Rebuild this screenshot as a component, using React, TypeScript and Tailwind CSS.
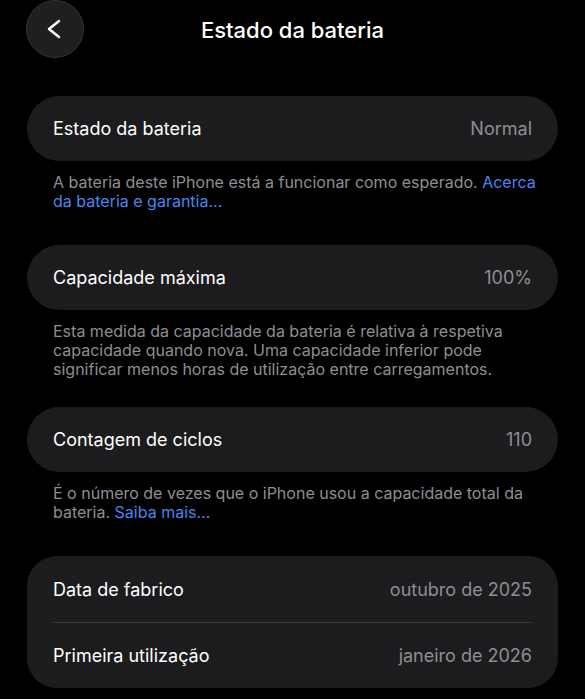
import React from "react";

const font = { fontFamily: "Inter, 'Noto Sans', sans-serif" };

function Row({ label, value, h = "h-[65px]" }: { label: string; value: string; h?: string }) {
  return (
    <div className={`flex ${h} items-center justify-between px-[26px]`}>
      <span className="text-[18px] text-white">{label}</span>
      <span className="text-[18px] text-[#8e8e93]">{value}</span>
    </div>
  );
}

function Note({ children }: { children: React.ReactNode }) {
  return (
    <p className="pl-[53px] pr-[48px] pt-[12px] text-[16px] leading-[19px] text-[#8e8e93]">
      {children}
    </p>
  );
}

export default function App() {
  return (
    <main
      className="min-h-screen w-[585px] h-[699px] overflow-hidden bg-black"
      style={font}
    >
      <header className="relative flex h-[60px] items-center justify-center">
        <button className="absolute left-[26px] top-0 flex h-[58px] w-[58px] items-center justify-center rounded-full border border-[#333335] bg-[#1f1f21]">
          <svg width="16" height="20" viewBox="0 0 16 20" fill="none" className="-ml-[2px]">
            <path
              d="M13 2L3 10l10 8"
              stroke="white"
              strokeWidth="2.5"
              strokeLinecap="round"
              strokeLinejoin="round"
            />
          </svg>
        </button>
        <h1 className="text-[22px] font-medium text-white">Estado da bateria</h1>
      </header>

      <div className="mt-[36px] px-[27px]">
        <div className="rounded-full bg-[#1c1c1e]">
          <Row label="Estado da bateria" value="Normal" />
        </div>
      </div>
      <Note>
        A bateria deste iPhone está a funcionar como esperado.{" "}
        <span className="text-[#4a86ea]">Acerca da bateria e garantia...</span>
      </Note>

      <div className="mt-[34px] px-[27px]">
        <div className="rounded-full bg-[#1c1c1e]">
          <Row label="Capacidade máxima" value="100%" />
        </div>
      </div>
      <Note>
        Esta medida da capacidade da bateria é relativa à respetiva capacidade
        quando nova. Uma capacidade inferior pode significar menos horas de
        utilização entre carregamentos.
      </Note>

      <div className="mt-[28px] px-[27px]">
        <div className="rounded-full bg-[#1c1c1e]">
          <Row label="Contagem de ciclos" value="110" />
        </div>
      </div>
      <Note>
        É o número de vezes que o iPhone usou a capacidade total da bateria.{" "}
        <span className="text-[#4a86ea]">Saiba mais...</span>
      </Note>

      <div className="mt-[34px] px-[27px]">
        <div className="rounded-[30px] bg-[#1c1c1e]">
          <Row label="Data de fabrico" value="outubro de 2025" h="h-[66px]" />
          <div className="mx-[26px] h-px bg-[#38383a]" />
          <Row label="Primeira utilização" value="janeiro de 2026" />
        </div>
      </div>
    </main>
  );
}
